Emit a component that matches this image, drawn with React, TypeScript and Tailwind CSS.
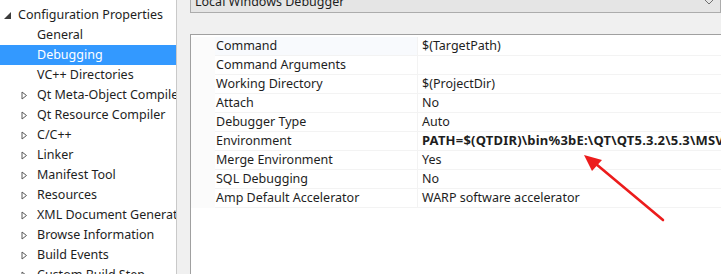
const treeItems: { label: string; kind: "leaf" | "branch" }[] = [
  { label: "General", kind: "leaf" },
  { label: "Debugging", kind: "leaf" },
  { label: "VC++ Directories", kind: "leaf" },
  { label: "Qt Meta-Object Compiler", kind: "branch" },
  { label: "Qt Resource Compiler", kind: "branch" },
  { label: "C/C++", kind: "branch" },
  { label: "Linker", kind: "branch" },
  { label: "Manifest Tool", kind: "branch" },
  { label: "Resources", kind: "branch" },
  { label: "XML Document Generator", kind: "branch" },
  { label: "Browse Information", kind: "branch" },
  { label: "Build Events", kind: "branch" },
  { label: "Custom Build Step", kind: "branch" },
];

const props: { name: string; value: string; bold?: boolean }[] = [
  { name: "Command", value: "$(TargetPath)" },
  { name: "Command Arguments", value: "" },
  { name: "Working Directory", value: "$(ProjectDir)" },
  { name: "Attach", value: "No" },
  { name: "Debugger Type", value: "Auto" },
  { name: "Environment", value: "PATH=$(QTDIR)\\bin%3bE:\\QT\\QT5.3.2\\5.3\\MSVC2013_OPENGL\\bin%3b$(PATH)", bold: true },
  { name: "Merge Environment", value: "Yes" },
  { name: "SQL Debugging", value: "No" },
  { name: "Amp Default Accelerator", value: "WARP software accelerator" },
];

function Expander() {
  return (
    <svg width="7" height="9" viewBox="0 0 7 9" className="shrink-0">
      <path d="M1 1 L5.5 4.5 L1 8 Z" fill="none" stroke="#595959" strokeWidth="1" />
    </svg>
  );
}

export default function App() {
  return (
    <div
      className="relative flex h-[274px] w-[721px] overflow-hidden bg-[#f0f0f0] text-[12.5px] text-[#1e1e1e]"
      style={{ fontFamily: '"Noto Sans", "Liberation Sans", sans-serif' }}
    >
      {/* tree */}
      <div className="w-[177px] shrink-0 border-r border-[#c9c9c9] bg-white pt-[5px]">
        <div className="flex h-[20px] items-center">
          <svg width="7" height="7" viewBox="0 0 7 7" className="ml-[4px] mr-[7px]">
            <path d="M7 0 L7 7 L0 7 Z" fill="#3c3c3c" />
          </svg>
          <span className="whitespace-nowrap leading-none">Configuration Properties</span>
        </div>
        {treeItems.map((it) => {
          const selected = it.label === "Debugging";
          return (
            <div
              key={it.label}
              className={`flex h-[20px] items-center overflow-hidden whitespace-nowrap ${selected ? "bg-[#3399ff] text-white" : ""}`}
            >
              <div className="flex w-[37px] shrink-0 justify-end pr-[9px]">
                {it.kind === "branch" && <Expander />}
              </div>
              <span className="leading-none">{it.label}</span>
            </div>
          );
        })}
      </div>

      {/* right side */}
      <div className="ml-[13px] flex min-w-0 flex-1 flex-col">
        <div className="-mt-[9px] flex h-[22px] shrink-0 items-center justify-between border border-[#acacac] bg-[#e5e5e5] pl-[4px] pr-[6px]">
          <span className="whitespace-nowrap leading-none">Local Windows Debugger</span>
          <svg width="10" height="6" viewBox="0 0 10 6">
            <path d="M1 1 L5 5 L9 1" fill="none" stroke="#707070" strokeWidth="1" />
          </svg>
        </div>
        <div className="mt-[21px] flex-1 border-l border-t border-[#a0a0a0] bg-white pt-[2px]">
          {props.map((p) => (
            <div key={p.name} className="flex h-[19px] items-center whitespace-nowrap">
              <div className="h-full w-[24px] shrink-0 bg-[#fbfbfb]" />
              <div
                className={`flex h-full w-[203px] shrink-0 items-center border-b border-r border-[#f3f3f3] pl-[1px] ${p.name === "Command" ? "bg-[#f8fafd]" : ""}`}
              >
                {p.name}
              </div>
              <div
                className={`flex h-full flex-1 items-center border-b border-[#f3f3f3] pl-[4px] ${p.bold ? "text-[13px] font-bold tracking-[0.2px]" : ""}`}
              >
                {p.value}
              </div>
            </div>
          ))}
        </div>
      </div>

      {/* annotation arrow */}
      <svg className="pointer-events-none absolute left-0 top-0" width="721" height="274">
        <line x1="663" y1="220" x2="596" y2="164" stroke="#ec1c1c" strokeWidth="2.6" strokeLinecap="round" />
        <path d="M584 155 L602 160 L592 171 Z" fill="#ec1c1c" />
      </svg>
    </div>
  );
}
